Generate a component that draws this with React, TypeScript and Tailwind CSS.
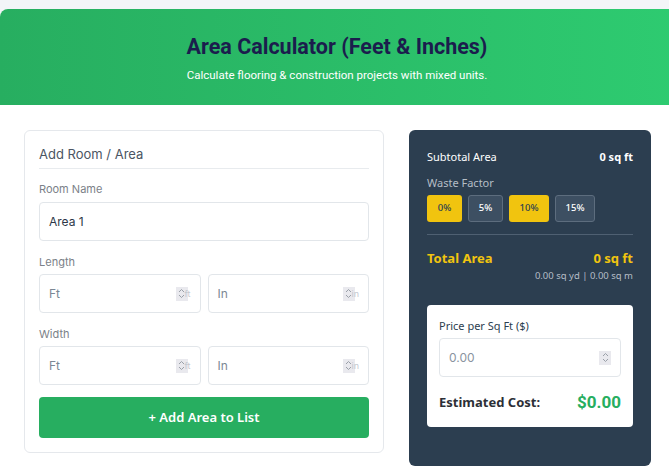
import React from "react";

function Spin({ suffix }: { suffix?: string }) {
  return (
    <div className="absolute right-[9px] top-1/2 -translate-y-1/2 flex items-center pointer-events-none">
      <div className="w-[12px] h-[14px] bg-[#e9e9ee] flex flex-col items-center justify-center">
        <svg width="7" height="11" viewBox="0 0 7 11" fill="none" stroke="#9aa0a8" strokeWidth="1">
          <path d="M1 4 L3.5 1.5 L6 4" />
          <path d="M1 7 L3.5 9.5 L6 7" />
        </svg>
      </div>
      {suffix && <span className="text-[9px] text-[#c4c8cf] -ml-[3px] leading-none" style={{ fontFamily: "Inter, sans-serif" }}>{suffix}</span>}
    </div>
  );
}

function NumInput({ ph, suffix }: { ph: string; suffix: string }) {
  return (
    <div className="relative flex-1 h-[39px] border border-[#e2e6ea] rounded-[4px] bg-white flex items-center pl-[9px]">
      <span className="text-[12px] text-[#7b8794]">{ph}</span>
      <Spin suffix={suffix} />
    </div>
  );
}

export default function App() {
  return (
    <div className="min-h-[472px] w-[669px] bg-[#f3f5f8] pt-[9px] overflow-hidden" style={{ fontFamily: "Inter, sans-serif" }}>
      <div className="w-[700px] min-h-[463px] rounded-tl-[8px] bg-white">
        <div className="h-[96px] rounded-tl-[8px] bg-gradient-to-r from-[#27ae60] to-[#2ecc71] flex flex-col items-center pt-[24px]" style={{ paddingRight: 26 }}>
          <h1 className="text-[21.5px] leading-[28px] font-bold text-[#1b1d4d]" style={{ fontFamily: "Roboto, sans-serif" }}>
            Area Calculator (Feet &amp; Inches)
          </h1>
          <p className="mt-[7px] text-[11.5px] leading-[14px] text-white" style={{ fontFamily: "Roboto, sans-serif" }}>
            Calculate flooring &amp; construction projects with mixed units.
          </p>
        </div>

        <div className="flex items-start pl-[24px] pt-[25px] gap-[25px]">
          <div className="w-[360px] bg-white border border-[#e5e8ec] rounded-[6px] px-[14px] pt-[15px] pb-[14px]">
            <div className="text-[13px] leading-[16px] text-[#4b5563] pb-[6px] border-b border-[#e8ebee]">Add Room / Area</div>
            <div className="mt-[14px] text-[11px] leading-[13px] text-[#7b8188]">Room Name</div>
            <div className="mt-[6px] h-[39px] border border-[#e2e6ea] rounded-[4px] flex items-center pl-[9px]">
              <span className="text-[12px] text-[#2d3748]">Area 1</span>
            </div>
            <div className="mt-[15px] text-[11px] leading-[13px] text-[#7b8188]">Length</div>
            <div className="mt-[5px] flex gap-[7px]">
              <NumInput ph="Ft" suffix="ft" />
              <NumInput ph="In" suffix="in" />
            </div>
            <div className="mt-[15px] text-[11px] leading-[13px] text-[#7b8188]">Width</div>
            <div className="mt-[5px] flex gap-[7px]">
              <NumInput ph="Ft" suffix="ft" />
              <NumInput ph="In" suffix="in" />
            </div>
            <button className="mt-[12px] w-full h-[41px] rounded-[4px] bg-[#27ae60] text-white text-[13px] font-semibold" style={{ fontFamily: "'Noto Sans', sans-serif" }}>
              + Add Area to List
            </button>
          </div>

          <div className="w-[242px] h-[336px] bg-[#2c3e50] rounded-[6px] px-[18px] pt-[20px]" style={{ fontFamily: "'Noto Sans', sans-serif" }}>
            <div className="flex justify-between items-center text-[11px] leading-[14px] text-white">
              <span>Subtotal Area</span>
              <span className="font-bold">0 sq ft</span>
            </div>
            <div className="mt-[12px] text-[11px] leading-[14px] text-[#b5bdc6]">Waste Factor</div>
            <div className="mt-[5px] flex gap-[6px]">
              <div className="w-[35px] h-[27px] rounded-[3px] bg-[#f1c40f] text-[#2c3e50] text-[9.5px] font-medium flex items-center justify-center">0%</div>
              <div className="w-[35px] h-[27px] rounded-[3px] bg-[#3d4f62] border border-[#5d6d7e] text-white text-[9.5px] font-medium flex items-center justify-center">5%</div>
              <div className="w-[40px] h-[27px] rounded-[3px] bg-[#f1c40f] text-[#2c3e50] text-[9.5px] font-medium flex items-center justify-center">10%</div>
              <div className="w-[40px] h-[27px] rounded-[3px] bg-[#3d4f62] border border-[#5d6d7e] text-white text-[9.5px] font-medium flex items-center justify-center">15%</div>
            </div>
            <div className="mt-[12px] border-t border-[#4f6072]" />
            <div className="mt-[14px] flex justify-between items-center text-[13px] leading-[18px] font-bold text-[#f1c40f]">
              <span>Total Area</span>
              <span>0 sq ft</span>
            </div>
            <div className="mt-[3px] text-right text-[9.5px] leading-[12px] text-[#b5bdc6]">0.00 sq yd | 0.00 sq m</div>
            <div className="mt-[23px] bg-white rounded-[4px] px-[12px] pt-[14px] pb-[11px]">
              <div className="text-[11px] leading-[14px] text-[#2c3e50]">Price per Sq Ft ($)</div>
              <div className="relative mt-[5px] h-[39px] border border-[#e2e6ea] rounded-[4px] flex items-center pl-[9px]">
                <span className="text-[12px] text-[#8a94a0]" style={{ fontFamily: "Inter, sans-serif" }}>0.00</span>
                <Spin />
              </div>
              <div className="mt-[13px] flex justify-between items-center">
                <span className="text-[13px] font-bold text-[#2c2f36]">Estimated Cost:</span>
                <span className="text-[17px] font-bold text-[#27ae60]" style={{ fontFamily: "Roboto, sans-serif" }}>$0.00</span>
              </div>
            </div>
          </div>
        </div>
      </div>
    </div>
  );
}
